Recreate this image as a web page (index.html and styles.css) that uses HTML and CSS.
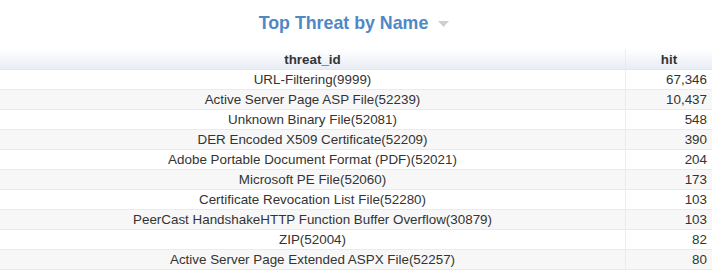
FILE: index.html
```html
<!DOCTYPE html>
<html>
<head>
<meta charset="utf-8">
<link rel="stylesheet" href="styles.css">
</head>
<body>
<div class="widget">
  <div class="title-bar">
    <span class="title">Top Threat by Name</span>
    <svg class="caret" width="11" height="6" viewBox="0 0 11 6"><polygon points="0,0 11,0 5.5,6" fill="#cfcfcf"/></svg>
  </div>
  <table class="grid">
    <thead>
      <tr><th class="c-name">threat_id</th><th class="c-hit">hit</th></tr>
    </thead>
    <tbody>
      <tr><td class="c-name">URL-Filtering(9999)</td><td class="c-hit">67,346</td></tr>
      <tr><td class="c-name">Active Server Page ASP File(52239)</td><td class="c-hit">10,437</td></tr>
      <tr><td class="c-name">Unknown Binary File(52081)</td><td class="c-hit">548</td></tr>
      <tr><td class="c-name">DER Encoded X509 Certificate(52209)</td><td class="c-hit">390</td></tr>
      <tr><td class="c-name">Adobe Portable Document Format (PDF)(52021)</td><td class="c-hit">204</td></tr>
      <tr><td class="c-name">Microsoft PE File(52060)</td><td class="c-hit">173</td></tr>
      <tr><td class="c-name">Certificate Revocation List File(52280)</td><td class="c-hit">103</td></tr>
      <tr><td class="c-name">PeerCast HandshakeHTTP Function Buffer Overflow(30879)</td><td class="c-hit">103</td></tr>
      <tr><td class="c-name">ZIP(52004)</td><td class="c-hit">82</td></tr>
      <tr><td class="c-name">Active Server Page Extended ASPX File(52257)</td><td class="c-hit">80</td></tr>
    </tbody>
  </table>
</div>
</body>
</html>
```
FILE: styles.css
```css
html, body {
  margin: 0;
  padding: 0;
  background: #fff;
}
body {
  font-family: "Liberation Sans", Arial, sans-serif;
  color: #333;
}
.widget {
  width: 712px;
}
.title-bar {
  height: 49px;
  display: flex;
  align-items: center;
  justify-content: center;
  gap: 10px;
  padding-right: 4px;
  box-sizing: border-box;
}
.title {
  font-size: 17.8px;
  font-weight: bold;
  color: #4f88c6;
  margin-top: -3px;
}
.caret {
  margin-top: -2px;
}
.grid {
  width: 712px;
  border-collapse: collapse;
  table-layout: fixed;
  font-size: 13.4px;
}
.grid th {
  height: 20px;
  padding: 0 5px;
  font-weight: bold;
  background: linear-gradient(to bottom, #ffffff 0%, #e8ecf4 100%);
  border-bottom: 1px solid #e6e6e6;
  text-align: center;
}
.grid td {
  height: 19px;
  padding: 0 5px;
  border-bottom: 1px solid #ebebeb;
}
.grid tbody tr:nth-child(even) td {
  background: #f7f7f7;
}
.c-name {
  width: 615px;
  text-align: center;
  border-right: 1px solid #ececec;
}
.grid th.c-hit {
  text-align: center;
}
.grid td.c-hit {
  text-align: right;
}
```
